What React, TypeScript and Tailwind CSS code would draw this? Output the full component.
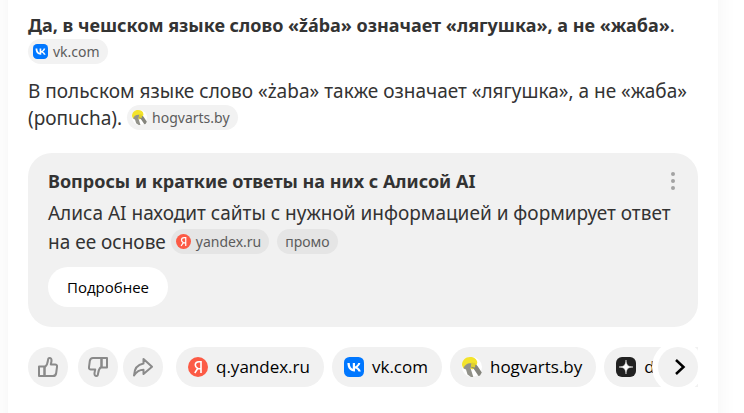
import type { ReactNode } from 'react';

interface IconProps {
  className?: string;
}

interface Source {
  host: string;
  icon: (props: IconProps) => ReactNode;
}

function YandexIcon({ className }: IconProps) {
  return (
    <svg className={className} viewBox="0 0 20 20" fill="none" aria-hidden="true">
      <circle cx="10" cy="10" r="10" fill="#fc5a45" />
      <path d="M13 16V4.7h-2C8.7 4.7 7.3 6 7.3 8c0 1.7 1 2.6 2.4 3.5L6.8 16M13 11.7h-3" stroke="#fff" strokeWidth="1.6" />
    </svg>
  );
}

function VkIcon({ className }: IconProps) {
  return (
    <svg className={className} viewBox="0 0 20 20" fill="none" aria-hidden="true">
      <rect width="20" height="20" rx="5.5" fill="#0077ff" />
      <path
        d="M10.6 14.4C6 14.4 3.5 11.3 3.4 6.1h2.3c.1 3.8 1.8 5.4 3.1 5.7V6.1H11v3.3c1.3-.1 2.7-1.6 3.2-3.3h2.1c-.3 2-1.8 3.5-2.9 4.1 1.1.5 2.8 1.8 3.4 4.2h-2.3c-.5-1.6-1.8-2.8-3.5-3v3z"
        fill="#fff"
      />
    </svg>
  );
}

function HogvartsIcon({ className }: IconProps) {
  return (
    <svg className={className} viewBox="0 0 20 20" fill="none" aria-hidden="true">
      <circle cx="10" cy="10" r="10" fill="#fff" />
      <path d="M0 8C0 3.5 3.5 0 8 0c4 0 7 2 7.300 5.500L14 11l-4 1.500L6 10l-5 1z" fill="#f3e32b" />
      <path d="M1.500 11.500C2.500 8 6 5.800 9.800 6.500L8.500 11l2.800 9H9l-3.500-2.500-1.500-5z" fill="#92928a" />
      <path d="M10.500 8c3-1.200 4.500 0 6 2.500l3.300 5-1.800 3-1.500.5-5-7.500-2.500-1z" fill="#85857d" />
      <path d="m9.500 5.500 4 .5-.5 4.500-3.500-.5z" fill="#e0d12c" />
    </svg>
  );
}

function DzenIcon({ className }: IconProps) {
  return (
    <svg className={className} viewBox="0 0 20 20" fill="none" aria-hidden="true">
      <rect width="20" height="20" rx="6" fill="#212121" />
      <path
        d="M10 3c.3 4.8 1.7 6.7 7 7-5.3.3-6.7 2.2-7 7-.3-4.8-1.7-6.7-7-7 5.3-.3 6.7-2.2 7-7z"
        fill="#fff"
        stroke="#fff"
        strokeWidth=".5"
      />
    </svg>
  );
}

function ThumbUpIcon({ className }: IconProps) {
  return (
    <svg className={className} viewBox="0 0 20 20" fill="none" stroke="currentColor" strokeWidth="2" strokeLinejoin="round" aria-hidden="true">
      <path d="M1 9.5h5.5V19H1z" />
      <path d="M6.5 10.5C8.8 8.6 9.8 6.3 10 3c.1-1.3.6-2 1.5-2 1.500 0 2.200 1.200 2 3l-.7 3.500H17c1.500 0 2.200 1 2 2.300l-.8 6.200c-.3 2-1.300 3-3.200 3H6.500z" />
    </svg>
  );
}

function ShareIcon({ className }: IconProps) {
  return (
    <svg className={className} viewBox="0 0 20 20" fill="none" stroke="currentColor" strokeWidth="2" strokeLinejoin="round" aria-hidden="true">
      <path d="M10.5 2 19 9.8l-8.5 7.2v-4.2C6.5 12.8 3.6 14.5 1 18.5c.3-6.5 3.5-11 9.5-12z" />
    </svg>
  );
}

const sources: Source[] = [
  { host: 'q.yandex.ru', icon: YandexIcon },
  { host: 'vk.com', icon: VkIcon },
  { host: 'hogvarts.by', icon: HogvartsIcon },
  { host: 'dzen.ru', icon: DzenIcon },
];

function InlineSource({ host, icon: Icon, dark = false }: Source & { dark?: boolean }) {
  return (
    <a
      href={`https://${host}`}
      className={`inline-flex h-[25px] items-center gap-[5px] rounded-full pl-[5px] pr-2 align-baseline text-[14px] leading-5 text-[#5c5c5c] ${
        dark ? 'bg-[#e5e5e5]' : 'bg-[#f2f2f2]'
      }`}
    >
      <Icon className="size-[15px]" />
      <span>{host}</span>
    </a>
  );
}

function RoundButton({ label, children }: { label: string; children: ReactNode }) {
  return (
    <button
      type="button"
      aria-label={label}
      className="flex size-10 shrink-0 items-center justify-center rounded-full bg-[#f1f1f1] text-[#8a8a8a]"
    >
      {children}
    </button>
  );
}

export default function App() {
  return (
    <div className="min-h-screen overflow-hidden bg-white pl-2 pr-[26px] font-['Noto_Sans','Open_Sans',sans-serif] text-[#333]">
      {/* Runs past the top and bottom edges so that only the side shadows show */}
      <main className="-my-6 min-h-[calc(100vh+48px)] px-5 pb-6 pt-9 shadow-[0_0_20px_rgba(0,0,0,0.05)]">
        <p className="text-[19px] leading-[27px]">
          <b className="text-[18px]">Да, в чешском языке слово «žába» означает «лягушка», а не «жаба»</b>.{' '}
          <InlineSource host="vk.com" icon={VkIcon} />
        </p>
        <p className="mt-3 text-[19px] leading-[27px]">
          В польском языке слово «żaba» также означает «лягушка», а не «жаба» (ропucha).{' '}
          <InlineSource host="hogvarts.by" icon={HogvartsIcon} />
        </p>

        <section className="mt-[21px] rounded-3xl bg-[#f1f1f1] px-5 pb-5 pt-3">
          <div className="flex items-center justify-between">
            <h2 className="text-[18px] font-bold leading-8">Вопросы и краткие ответы на них с Алисой AI</h2>
            <button type="button" aria-label="Ещё" className="flex w-2.5 justify-center text-[#a3a3a3]">
              <svg className="h-5 w-1 shrink-0" viewBox="0 0 4 20" fill="currentColor" aria-hidden="true">
                <circle cx="2" cy="3" r="2" />
                <circle cx="2" cy="10" r="2" />
                <circle cx="2" cy="17" r="2" />
              </svg>
            </button>
          </div>
          <p className="mt-0.5 text-[19px] leading-[29px]">
            Алиса AI находит сайты с нужной информацией и формирует ответ на ее основе{' '}
            <span className="inline-flex items-start gap-2">
              <InlineSource host="yandex.ru" icon={YandexIcon} dark />
              <span className="flex h-[25px] items-center rounded-full bg-[#e5e5e5] px-2 text-[14px] leading-5 text-[#5c5c5c]">
                промо
              </span>
            </span>
          </p>
          <button type="button" className="mt-2.5 h-10 rounded-full bg-white px-[19px] font-['Open_Sans','Noto_Sans',sans-serif] text-[15px] text-black">
            Подробнее
          </button>
        </section>

        <div className="relative mt-5 flex overflow-hidden">
          <RoundButton label="Нравится">
            <ThumbUpIcon className="size-5" />
          </RoundButton>
          <div className="ml-2.5 flex gap-[5px]">
            <RoundButton label="Не нравится">
              <ThumbUpIcon className="size-5 rotate-180" />
            </RoundButton>
            <RoundButton label="Поделиться">
              <ShareIcon className="size-5" />
            </RoundButton>
          </div>
          <nav aria-label="Источники" className="ml-[13px] flex min-w-0 gap-2 font-['Open_Sans','Noto_Sans',sans-serif]">
            {sources.map(({ host, icon: Icon }) => (
              <a
                key={host}
                href={`https://${host}`}
                className="flex h-10 shrink-0 items-center gap-2 rounded-full bg-[#f1f1f1] pl-3 pr-3.5 text-[17px] text-black"
              >
                <Icon className="size-5" />
                {host}
              </a>
            ))}
          </nav>
          {/* Scroll button lies over the end of the list */}
          <button
            type="button"
            aria-label="Дальше"
            className="absolute right-0 top-0 flex size-10 items-center justify-center rounded-full bg-[#f1f1f1] text-black shadow-[0_0_0_6px_#fff]"
          >
            <svg className="size-5" viewBox="0 0 20 20" fill="none" stroke="currentColor" strokeWidth="2.5" aria-hidden="true">
              <path d="m8 3 7.5 7L8 17" />
            </svg>
          </button>
        </div>
      </main>
    </div>
  );
}
